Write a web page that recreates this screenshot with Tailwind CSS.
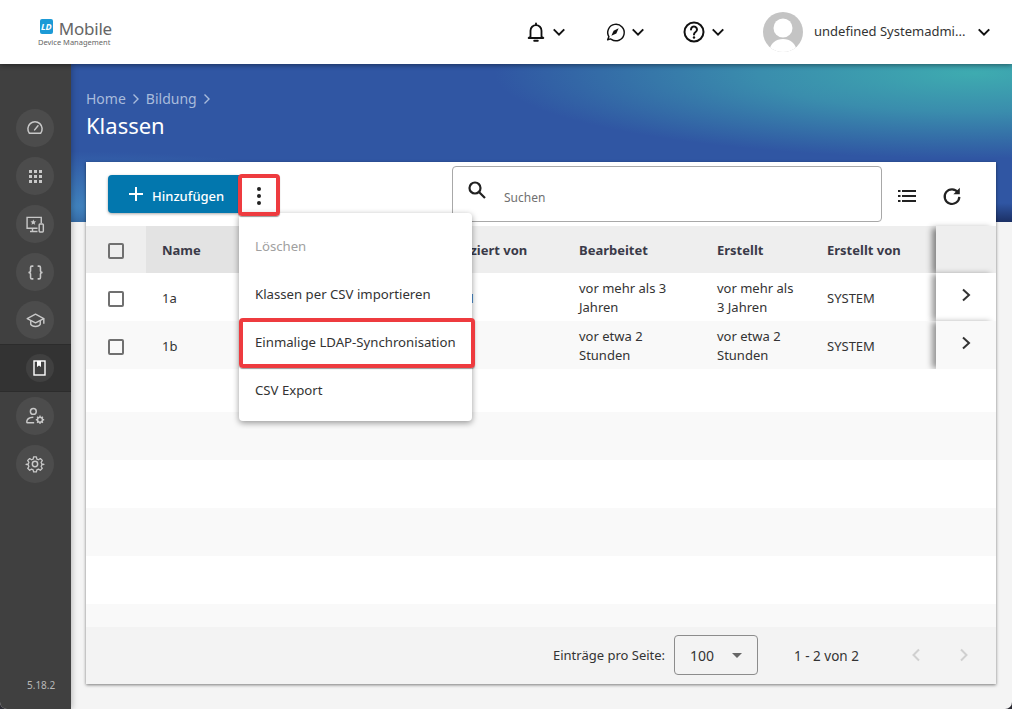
<!DOCTYPE html>
<html lang="de">

<head>
    <meta charset="UTF-8">
    <meta name="viewport" content="width=device-width, initial-scale=1.0">
    <script src="https://cdn.jsdelivr.net/npm/@tailwindcss/browser@4"></script>
    <title>Klassen</title>
</head>

<body class="bg-[#2b2b33] font-['Noto_Sans','Open_Sans',sans-serif]">
    <div class="w-[1012px] h-[709px] flex flex-col overflow-hidden rounded-b-[7px] bg-[#f4f4f4] relative">

        <!-- header -->
        <header class="h-[64px] shrink-0 bg-white flex items-center relative z-20 shadow-[0_1px_5px_rgba(0,0,0,0.45)]">
            <div class="w-[74px] ml-[38px] flex flex-col text-[#666] shrink-0">
                <div class="flex items-start h-[19px] ml-[2px] gap-[6px]">
                    <div class="w-[15px] h-[15px] rounded-[2px] bg-[#1c9ad6] text-white text-[9px] font-bold italic leading-[15px] text-center">LD</div>
                    <span class="text-[17px] leading-[19px] tracking-[-0.2px]">Mobile</span>
                </div>
                <span class="text-[7.5px] leading-[8px] whitespace-nowrap">Device Management</span>
            </div>

            <div class="ml-[413px] flex items-center">
                <svg class="w-[22px] h-[22px]" viewBox="0 0 24 24" fill="none" stroke="#111" stroke-width="2"><path d="M6 17V10.5a6 6 0 0 1 12 0V17l2 1.5H4z" stroke-linejoin="round"/><path d="M12 2.5v2M10 21.5h4" stroke-linecap="round"/></svg>
                <svg class="w-[18px] h-[18px] ml-[3px]" viewBox="0 0 24 24" fill="none" stroke="#111" stroke-width="2.6"><path d="M5 8.5l7 7 7-7"/></svg>

                <svg class="w-[22px] h-[22px] ml-[36px]" viewBox="0 0 24 24" fill="none" stroke="#111" stroke-width="1.6"><path d="M4 20.5l1.3-3.4A9 9 0 1 1 8 20a9 9 0 0 1-1-.5z" stroke-linejoin="round"/><path d="M16 8l-5.5 2.5L8 16l5.5-2.5z" fill="#111" stroke="none"/></svg>
                <svg class="w-[18px] h-[18px] ml-[3px]" viewBox="0 0 24 24" fill="none" stroke="#111" stroke-width="2.6"><path d="M5 8.5l7 7 7-7"/></svg>

                <svg class="w-[24px] h-[24px] ml-[35px]" viewBox="0 0 24 24" fill="none" stroke="#111" stroke-width="2"><circle cx="12" cy="12" r="9.5"/><path d="M9 9.5a3 3 0 1 1 4.6 2.5c-1 .7-1.6 1.2-1.6 2.5" stroke-linecap="round"/><circle cx="12" cy="17.5" r="1.2" fill="#111" stroke="none"/></svg>
                <svg class="w-[18px] h-[18px] ml-[3px]" viewBox="0 0 24 24" fill="none" stroke="#111" stroke-width="2.6"><path d="M5 8.5l7 7 7-7"/></svg>

                <div class="w-[40px] h-[40px] ml-[36px] rounded-full bg-[#c4c4c4] overflow-hidden shrink-0">
                    <svg viewBox="0 0 40 40" class="w-[40px] h-[40px]"><circle cx="20" cy="16" r="9.500" fill="#fff"/><path d="M6 40c1-9 7-13 14-13s13 4 14 13z" fill="#fff"/></svg>
                </div>
                <span class="w-[161px] ml-[11px] text-[13px] text-[#333] whitespace-nowrap">undefined Systemadmi...</span>
                <svg class="w-[18px] h-[18px]" viewBox="0 0 24 24" fill="none" stroke="#111" stroke-width="2.8"><path d="M5 8.5l7 7 7-7"/></svg>
            </div>
        </header>

        <div class="flex flex-1 min-h-0">
            <!-- sidebar -->
            <aside class="w-[71px] shrink-0 bg-[#404040] flex flex-col relative z-10 shadow-[1px_0_6px_rgba(0,0,0,0.25)]">
                <div class="pt-[40px] flex flex-col">
                    <div class="h-[48px] flex items-center pl-[16px]"><div class="w-[38px] h-[38px] rounded-full bg-[#4c4c4c] flex items-center justify-center">
                        <svg class="w-[18px] h-[18px]" viewBox="0 0 24 24" fill="none" stroke="#c8c8c8" stroke-width="2"><path d="M4.5 19a9.5 9.5 0 1 1 15 0z" stroke-linejoin="round"/><path d="M11.5 14.5L16 9" stroke-linecap="round"/></svg>
                    </div></div>
                    <div class="h-[48px] flex items-center pl-[16px]"><div class="w-[38px] h-[38px] rounded-full bg-[#4c4c4c] flex items-center justify-center">
                        <svg class="w-[13px] h-[13px]" viewBox="0 0 13 13" fill="#c8c8c8"><rect width="3" height="3"/><rect x="5" width="3" height="3"/><rect x="10" width="3" height="3"/><rect y="5" width="3" height="3"/><rect x="5" y="5" width="3" height="3"/><rect x="10" y="5" width="3" height="3"/><rect y="10" width="3" height="3"/><rect x="5" y="10" width="3" height="3"/><rect x="10" y="10" width="3" height="3"/></svg>
                    </div></div>
                    <div class="h-[48px] flex items-center pl-[16px]"><div class="w-[38px] h-[38px] rounded-full bg-[#4c4c4c] flex items-center justify-center">
                        <svg class="w-[20px] h-[20px]" viewBox="0 0 24 24" fill="none" stroke="#c8c8c8" stroke-width="1.7"><path d="M15 17H2.5V4h17v7M6 21h9M9 17v4"/><path d="M10 6.5l1 2.2 2.4.2-1.8 1.6.6 2.4-2.2-1.3-2.2 1.3.6-2.4-1.8-1.6 2.4-.2z" fill="#c8c8c8" stroke="none"/><rect x="17" y="12" width="5" height="9.5" rx="1"/></svg>
                    </div></div>
                    <div class="h-[48px] flex items-center pl-[16px]"><div class="w-[38px] h-[38px] rounded-full bg-[#4c4c4c] flex items-center justify-center">
                        <svg class="w-[17px] h-[17px]" viewBox="0 0 24 24" fill="none" stroke="#c8c8c8" stroke-width="2.2"><path d="M9 3H7a2 2 0 0 0-2 2v4.5c0 1.4-1 2.5-3 2.5 2 0 3 1.100 3 2.500V19a2 2 0 0 0 2 2h2M15 3h2a2 2 0 0 1 2 2v4.500c0 1.400 1 2.500 3 2.500-2 0-3 1.100-3 2.500V19a2 2 0 0 1-2 2h-2"/></svg>
                    </div></div>
                    <div class="h-[48px] flex items-center pl-[16px]"><div class="w-[38px] h-[38px] rounded-full bg-[#4c4c4c] flex items-center justify-center">
                        <svg class="w-[19px] h-[19px]" viewBox="0 0 24 24" fill="none" stroke="#c8c8c8" stroke-width="1.8" stroke-linejoin="round"><path d="M1.500 9.500L12 4l10.500 5.500L12 15z"/><path d="M6 12v5c2 3.500 10 3.500 12 0v-5M22.500 9.500V16"/></svg>
                    </div></div>
                    <div class="h-[48px] flex items-center pl-[26px] bg-[#333] border-y border-[#2c2c2c]"><div class="w-[28px] h-[28px] rounded-full bg-[#404040] flex items-center justify-center">
                        <svg class="w-[14px] h-[16px]" viewBox="0 0 14 16"><rect x="1" y="1" width="11" height="14" fill="none" stroke="#fff" stroke-width="1.4"/><path d="M4 1h4v6L6 5.500 4 7z" fill="#fff"/></svg>
                    </div></div>
                    <div class="h-[48px] flex items-center pl-[16px]"><div class="w-[38px] h-[38px] rounded-full bg-[#4c4c4c] flex items-center justify-center">
                        <svg class="w-[20px] h-[20px]" viewBox="0 0 24 24" fill="none" stroke="#c8c8c8" stroke-width="1.8"><circle cx="10" cy="6.500" r="3.500"/><path d="M2 20c0-4 3-6.500 8-6.500M2 20h9"/><circle cx="18" cy="16.500" r="3"/><path d="M18 11.500v2M18 19.500v2M13 16.500h2M21 16.500h2M14.500 13l1.400 1.400M20.100 18.600l1.400 1.400M14.500 20l1.400-1.400M20.100 14.400l1.400-1.400" stroke-width="1.6"/></svg>
                    </div></div>
                    <div class="h-[48px] flex items-center pl-[16px]"><div class="w-[38px] h-[38px] rounded-full bg-[#4c4c4c] flex items-center justify-center">
                        <svg class="w-[20px] h-[20px]" viewBox="0 0 24 24" fill="none" stroke="#c8c8c8" stroke-width="1.8" stroke-linejoin="round"><circle cx="12" cy="12" r="3.200"/><path d="M10 2h4l.6 3 2.300 1 2.600-1.700 2.800 2.800-1.700 2.600 1 2.300 3 .6v0l-3 .6-1 2.300 1.700 2.600-2.800 2.800-2.600-1.700-2.300 1-.6 3h-4l-.6-3-2.300-1-2.600 1.700-2.800-2.800 1.700-2.600-1-2.300-3-.6v0l3-.6 1-2.300L1.700 7.100l2.800-2.800 2.600 1.700 2.300-1z" transform="translate(1.800 1.800) scale(.85)"/></svg>
                    </div></div>
                </div>
                <span class="mt-auto mb-[17px] ml-[27px] text-[10px] leading-[14px] text-[#b8b8b8]">5.18.2</span>
            </aside>

            <!-- main -->
            <main class="flex-1 relative">
                <div class="h-[158px] pt-[25px] pl-[15px] bg-[radial-gradient(ellipse_480px_85px_at_96%_6%,#3eabb0_0%,#3a8dad_45%,rgba(48,86,163,0)_100%),radial-gradient(ellipse_320px_55px_at_0%_90%,#4082bd_0%,rgba(48,86,163,0)_100%),linear-gradient(180deg,rgba(0,0,0,0)_88%,rgba(20,35,80,0.75)_100%),linear-gradient(#3056a3,#3056a3)]">
                    <div class="flex items-center text-[14px] leading-[20px] text-[#a9bcdc]">
                        <span>Home</span>
                        <svg class="w-[12px] h-[12px] mx-[4px]" viewBox="0 0 12 12" fill="none" stroke="#a9bcdc" stroke-width="1.4"><path d="M3.500 1.500L8 6l-4.500 4.500"/></svg>
                        <span>Bildung</span>
                        <svg class="w-[12px] h-[12px] mx-[4px]" viewBox="0 0 12 12" fill="none" stroke="#a9bcdc" stroke-width="1.4"><path d="M3.500 1.500L8 6l-4.500 4.500"/></svg>
                    </div>
                    <h1 class="text-[22px] leading-[32px] text-white">Klassen</h1>
                </div>

                <section class="absolute left-[15px] top-[98px] w-[910px] h-[522px] bg-white flex flex-col shadow-[0_1px_3px_rgba(0,0,0,0.5)]">
                    <div class="h-[64px] shrink-0 flex items-start relative">
                        <button class="mt-[13px] ml-[22px] w-[131px] h-[38px] rounded-l-[4px] bg-[#0277ae] text-white text-[13px] font-medium flex items-center pl-[20px] gap-[8px] shadow-[0_1px_3px_rgba(0,0,0,0.35)]">
                            <svg class="w-[16px] h-[16px]" viewBox="0 0 16 16" stroke="#fff" stroke-width="2"><path d="M8 1v14M1 8h14"/></svg>
                            <span class="pt-[5px]">Hinzufügen</span>
                        </button>
                        <div class="mt-[13px] w-[40px] h-[41px] flex flex-col items-center justify-center gap-[3px]">
                            <span class="w-[4px] h-[4px] rounded-full bg-[#222]"></span>
                            <span class="w-[4px] h-[4px] rounded-full bg-[#222]"></span>
                            <span class="w-[4px] h-[4px] rounded-full bg-[#222]"></span>
                        </div>
                        <div class="mt-[4px] ml-[173px] w-[430px] h-[56px] rounded-[4px] border border-[#a8a8a8] flex items-center pl-[14px]">
                            <svg class="w-[20px] h-[20px] -mt-[8px]" viewBox="0 0 20 20" fill="none" stroke="#222" stroke-width="2.2"><circle cx="8" cy="8" r="5.500"/><path d="M12 12l6 6"/></svg>
                            <span class="ml-[17px] mt-[8px] text-[12px] text-[#707070]">Suchen</span>
                        </div>
                        <svg class="w-[18px] h-[12px] mt-[28px] ml-[16px]" viewBox="0 0 18 12" fill="#222"><rect width="2.500" height="2"/><rect x="4" width="14" height="2"/><rect y="5" width="2.500" height="2"/><rect x="4" y="5" width="14" height="2"/><rect y="10" width="2.500" height="2"/><rect x="4" y="10" width="14" height="2"/></svg>
                        <svg class="w-[22px] h-[22px] mt-[23px] ml-[25px]" viewBox="0 0 24 24" fill="none" stroke="#222" stroke-width="2.4"><path d="M18.500 8A8 8 0 1 0 20 13"/><path d="M20.500 3v7h-7z" fill="#222" stroke="none"/></svg>
                    </div>

                    <!-- table head -->
                    <div class="h-[47px] shrink-0 grid grid-cols-[60px_261px_155px_138px_110px_126px_60px] items-center bg-[#eeeeee] text-[13px] font-bold text-[#3a3a48]">
                        <div class="pl-[22px] pt-[2px] h-full flex items-center"><span class="block w-[16px] h-[16px] rounded-[2px] border-2 border-[#707070]"></span></div>
                        <div class="pl-[16px] pt-[2px] h-full flex items-center bg-[#e3e3e3]">Name</div>
                        <div class="pl-[22px] pt-[2px]">Modifiziert von</div>
                        <div class="pl-[17px] pt-[2px]">Bearbeitet</div>
                        <div class="pl-[17px] pt-[2px]">Erstellt</div>
                        <div class="pl-[17px] pt-[2px]">Erstellt von</div>
                        <div class="h-full bg-[#eeeeee] shadow-[-5px_1px_6px_-1px_rgba(0,0,0,0.45)]"></div>
                    </div>

                    <!-- rows -->
                    <div class="h-[48px] shrink-0 grid grid-cols-[60px_261px_155px_138px_110px_126px_60px] items-center bg-white text-[13px] leading-[19px] text-[#333]">
                        <div class="pl-[22px] pt-[4px]"><span class="block w-[16px] h-[16px] rounded-[2px] border-2 border-[#707070]"></span></div>
                        <div class="pl-[16px] pt-[2px]">1a</div>
                        <div class="pl-[19px] pt-[2px]">SYSTEM</div>
                        <div class="pl-[17px] pr-[8px] pt-[2px]">vor mehr als 3 Jahren</div>
                        <div class="pl-[17px] pr-[16px] pt-[2px]">vor mehr als 3 Jahren</div>
                        <div class="pl-[17px] pt-[2px]">SYSTEM</div>
                        <div class="h-full bg-white flex items-center justify-center pb-[4px] shadow-[-5px_0_6px_-1px_rgba(0,0,0,0.4)]">
                            <svg class="w-[12px] h-[14px]" viewBox="0 0 12 14" fill="none" stroke="#333" stroke-width="2"><path d="M3 1.500L9 7l-6 5.500"/></svg>
                        </div>
                    </div>
                    <div class="h-[48px] shrink-0 grid grid-cols-[60px_261px_155px_138px_110px_126px_60px] items-center bg-[#f9f9f9] text-[13px] leading-[19px] text-[#333]">
                        <div class="pl-[22px] pt-[4px]"><span class="block w-[16px] h-[16px] rounded-[2px] border-2 border-[#707070]"></span></div>
                        <div class="pl-[16px] pt-[2px]">1b</div>
                        <div class="pl-[19px] pt-[2px]">SYSTEM</div>
                        <div class="pl-[17px] pr-[8px] pt-[2px]">vor etwa 2 Stunden</div>
                        <div class="pl-[17px] pr-[16px] pt-[2px]">vor etwa 2 Stunden</div>
                        <div class="pl-[17px] pt-[2px]">SYSTEM</div>
                        <div class="h-full bg-[#f9f9f9] flex items-center justify-center pb-[4px] shadow-[-5px_0_6px_-1px_rgba(0,0,0,0.4)]">
                            <svg class="w-[12px] h-[14px]" viewBox="0 0 12 14" fill="none" stroke="#333" stroke-width="2"><path d="M3 1.500L9 7l-6 5.500"/></svg>
                        </div>
                    </div>

                    <!-- empty rows -->
                    <div class="h-[43px] shrink-0 bg-white"></div>
                    <div class="h-[48px] shrink-0 bg-[#f9f9f9]"></div>
                    <div class="h-[48px] shrink-0 bg-white"></div>
                    <div class="h-[48px] shrink-0 bg-[#f9f9f9]"></div>
                    <div class="h-[48px] shrink-0 bg-white"></div>
                    <div class="h-[23px] shrink-0 bg-[#f9f9f9]"></div>

                    <!-- footer -->
                    <div class="flex-1 bg-[#f3f3f3] flex items-center pb-[1px] text-[13px] text-[#333]">
                        <span class="ml-[467px] w-[121px] pt-[2px] whitespace-nowrap">Einträge pro Seite:</span>
                        <div class="w-[84px] h-[40px] rounded-[4px] border border-[#8c8c8c] flex items-center pl-[15px]">
                            <span class="text-[14px] w-[27px]">100</span>
                            <span class="ml-[15px] w-0 h-0 border-x-[5px] border-x-transparent border-t-[5px] border-t-[#666]"></span>
                        </div>
                        <span class="ml-[36px] w-[84px] pt-[2px] text-[13.5px] whitespace-nowrap">1 - 2 von 2</span>
                        <svg class="w-[10px] h-[14px] ml-[33px]" viewBox="0 0 10 14" fill="none" stroke="#d0d0d0" stroke-width="2"><path d="M8 1.500L2.500 7 8 12.500"/></svg>
                        <svg class="w-[10px] h-[14px] ml-[38px]" viewBox="0 0 10 14" fill="none" stroke="#d0d0d0" stroke-width="2"><path d="M2 1.500L7.500 7 2 12.500"/></svg>
                    </div>
                </section>

                <!-- kebab highlight -->
                <div class="absolute left-[167px] top-[110px] w-[42px] h-[42px] rounded-[4px] border-4 border-[#ee3b3f] z-30 shadow-[0_1px_1px_rgba(0,0,0,0.4)]"></div>

                <!-- dropdown -->
                <div class="absolute left-[168px] top-[149px] w-[233px] h-[208px] pt-[10px] bg-white rounded-[4px] z-20 shadow-[0_2px_6px_rgba(0,0,0,0.4)] text-[13.2px] text-[#333]">
                    <div class="h-[48px] pl-[16px] flex items-center text-[#a0a0a0]">Löschen</div>
                    <div class="h-[48px] pl-[16px] flex items-center">Klassen per CSV importieren</div>
                    <div class="h-[48px] pl-[16px] flex items-center whitespace-nowrap">Einmalige LDAP-Synchronisation</div>
                    <div class="h-[48px] pl-[16px] flex items-center">CSV Export</div>
                </div>

                <!-- item highlight -->
                <div class="absolute left-[168px] top-[254px] w-[236px] h-[50px] rounded-[4px] border-4 border-[#ee3b3f] z-30 shadow-[0_1px_1px_rgba(0,0,0,0.4)]"></div>
            </main>
        </div>
    </div>
</body>

</html>
